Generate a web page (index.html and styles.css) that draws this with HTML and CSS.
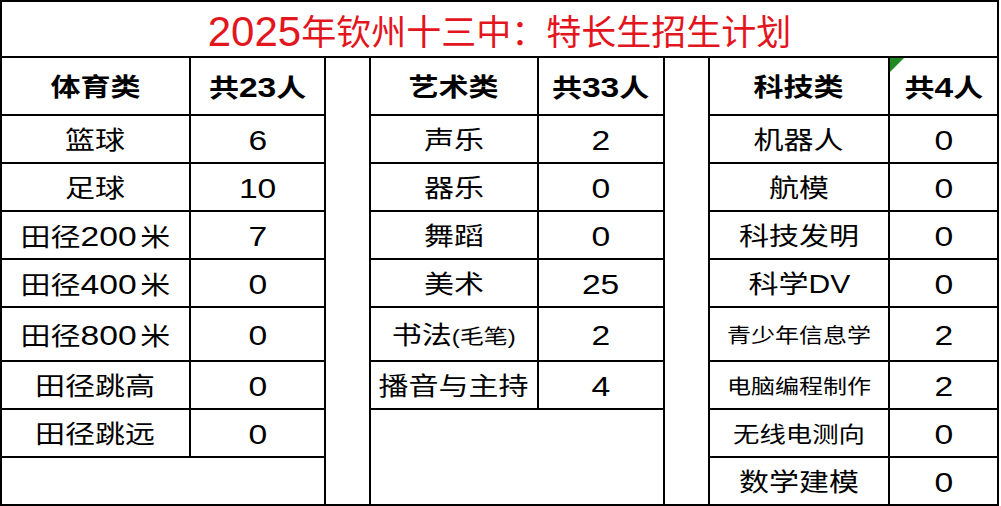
FILE: index.html
```html
<!DOCTYPE html>
<html lang="zh-CN">
<head>
<meta charset="utf-8">
<title>2025年钦州十三中：特长生招生计划</title>
<link rel="stylesheet" href="styles.css">
</head>
<body>
<div class="sheet">
  <div class="title"><span class="year">2025</span>年钦州十三中：特长生招生计划</div>
  <div class="body">
    <div class="tbl tbl-left">
      <div class="c k h"><span class="t">体育类</span></div><div class="c h"><span class="t">共<span class="d">23</span>人</span></div>
      <div class="c k"><span class="t">篮球</span></div><div class="c"><span class="t n">6</span></div>
      <div class="c k"><span class="t">足球</span></div><div class="c"><span class="t n">10</span></div>
      <div class="c k"><span class="t">田径<span class="d gap">200</span>米</span></div><div class="c"><span class="t n">7</span></div>
      <div class="c k"><span class="t">田径<span class="d gap">400</span>米</span></div><div class="c"><span class="t n">0</span></div>
      <div class="c k"><span class="t">田径<span class="d gap">800</span>米</span></div><div class="c"><span class="t n">0</span></div>
      <div class="c k"><span class="t">田径跳高</span></div><div class="c"><span class="t n">0</span></div>
      <div class="c k"><span class="t">田径跳远</span></div><div class="c"><span class="t n">0</span></div>
      <div class="fill"></div>
    </div>
    <div class="tbl tbl-mid">
      <div class="c k h"><span class="t">艺术类</span></div><div class="c h"><span class="t">共<span class="d">33</span>人</span></div>
      <div class="c k"><span class="t">声乐</span></div><div class="c"><span class="t n">2</span></div>
      <div class="c k"><span class="t">器乐</span></div><div class="c"><span class="t n">0</span></div>
      <div class="c k"><span class="t">舞蹈</span></div><div class="c"><span class="t n">0</span></div>
      <div class="c k"><span class="t">美术</span></div><div class="c"><span class="t n">25</span></div>
      <div class="c k"><span class="t">书法<span class="small">(毛笔)</span></span></div><div class="c"><span class="t n">2</span></div>
      <div class="c k"><span class="t">播音与主持</span></div><div class="c"><span class="t n">4</span></div>
      <div class="fill"></div>
    </div>
    <div class="tbl tbl-right">
      <div class="c k h"><span class="t">科技类</span></div><div class="c h mark"><span class="t">共<span class="d">4</span>人</span></div>
      <div class="c k"><span class="t">机器人</span></div><div class="c"><span class="t n">0</span></div>
      <div class="c k"><span class="t">航模</span></div><div class="c"><span class="t n">0</span></div>
      <div class="c k"><span class="t">科技发明</span></div><div class="c"><span class="t n">0</span></div>
      <div class="c k"><span class="t">科学DV</span></div><div class="c"><span class="t n">0</span></div>
      <div class="c k"><span class="t s20">青少年信息学</span></div><div class="c"><span class="t n">2</span></div>
      <div class="c k"><span class="t s20">电脑编程制作</span></div><div class="c"><span class="t n">2</span></div>
      <div class="c k"><span class="t s22">无线电测向</span></div><div class="c"><span class="t n">0</span></div>
      <div class="c k end"><span class="t">数学建模</span></div><div class="c end"><span class="t n">0</span></div>
    </div>
  </div>
</div>
</body>
</html>
```

FILE: styles.css
```css
html, body {
  margin: 0;
  padding: 0;
  background: #ffffff;
}

body {
  font-family: "Liberation Sans", "Noto Sans CJK SC", sans-serif;
  color: #000000;
}

.sheet {
  box-sizing: border-box;
  width: 999px;
  height: 506px;
  border: 2px solid #000000;
  display: flex;
  flex-direction: column;
}

.title {
  box-sizing: border-box;
  height: 56px;
  border-bottom: 2px solid #000000;
  display: flex;
  align-items: center;
  justify-content: center;
  color: #e3161e;
  font-size: 35px;
  line-height: 1;
  padding-top: 6px;
}

.year {
  font-size: 42px;
}

.body {
  flex: 1;
  display: flex;
  gap: 43px;
}

.tbl {
  box-sizing: border-box;
  display: grid;
  grid-template-rows: 58px repeat(4, 48px) 54px 48px 48px 1fr;
}

.tbl-left {
  width: 324px;
  grid-template-columns: 189px 133px;
  border-right: 2px solid #000000;
}

.tbl-mid {
  width: 296px;
  grid-template-columns: 168px 124px;
  grid-template-rows: 58px repeat(4, 48px) 54px 48px 1fr;
  border-left: 2px solid #000000;
  border-right: 2px solid #000000;
}

.tbl-right {
  width: 289px;
  grid-template-columns: 180px 107px;
  border-left: 2px solid #000000;
}

.c {
  box-sizing: border-box;
  border-bottom: 2px solid #000000;
  display: flex;
  align-items: center;
  justify-content: center;
  white-space: nowrap;
  padding-top: 3px;
}

.t {
  display: inline-block;
  font-size: 25px;
  line-height: 1;
  transform: scaleX(1.2);
}

.n,
.d {
  font-size: 28px;
}

.gap {
  margin-right: 3px;
}

.k {
  border-right: 2px solid #000000;
}

.h {
  font-weight: bold;
}

.end {
  border-bottom: none;
}

.fill {
  grid-column: 1 / -1;
}

.small {
  font-size: 20px;
}

.s20 {
  font-size: 20px;
}

.s22 {
  font-size: 22px;
}

.mark {
  position: relative;
}

.mark::before {
  content: "";
  position: absolute;
  top: 0;
  left: 0;
  width: 0;
  height: 0;
  border-top: 14px solid #1f8a21;
  border-right: 14px solid transparent;
}
```
